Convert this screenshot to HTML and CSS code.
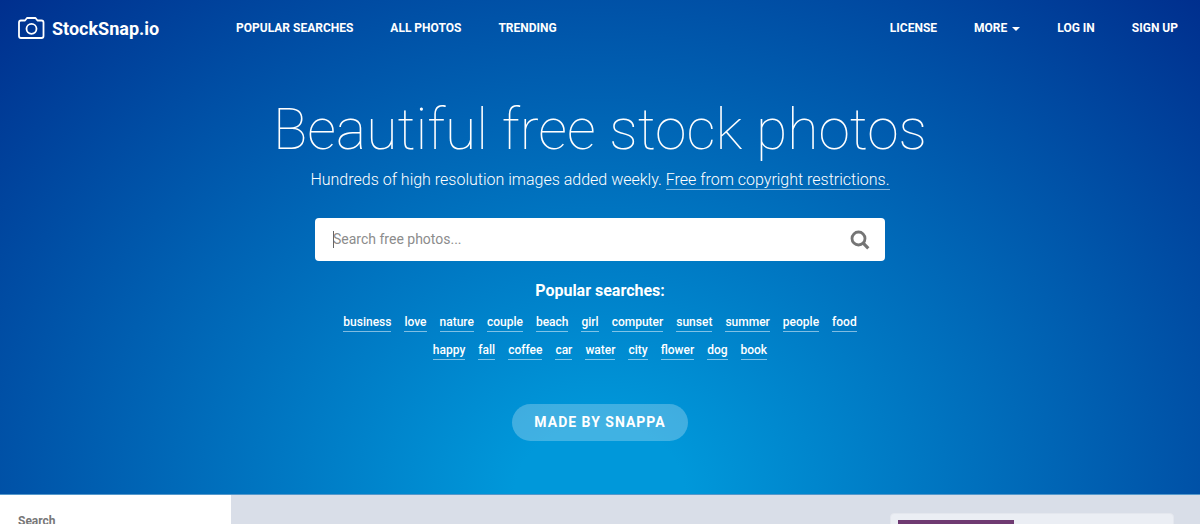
FILE: index.html
```html
<!DOCTYPE html>
<html lang="en">
<head>
<meta charset="utf-8">
<meta name="viewport" content="width=device-width, initial-scale=1">
<title>StockSnap.io</title>
<link rel="stylesheet" href="styles.css">
</head>
<body>
<header class="hero">
  <nav class="navbar">
    <a class="brand" href="#">
      <svg class="brand-icon" width="27" height="22" viewBox="0 0 27 22" fill="none" stroke="currentColor" stroke-width="1.800" stroke-linejoin="round" aria-hidden="true">
        <path d="M3 3.500H7L9 1H17.500L19.500 3.500H23.500Q25.500 3.500 25.500 5.500V19Q25.500 21 23.500 21H3Q1 21 1 19V5.500Q1 3.500 3 3.500Z"/>
        <circle cx="13.500" cy="11.800" r="5"/>
      </svg>
      <span>StockSnap.io</span>
    </a>
    <div class="nav-links">
      <a href="#">Popular Searches</a>
      <a href="#">All Photos</a>
      <a href="#">Trending</a>
    </div>
    <div class="nav-links nav-right">
      <a href="#">License</a>
      <a class="more" href="#">More <span class="caret"></span></a>
      <a href="#">Log In</a>
      <a href="#">Sign Up</a>
    </div>
  </nav>
  <div class="intro">
    <h1>Beautiful free stock photos</h1>
    <p class="tagline">Hundreds of high resolution images added weekly. <a href="#">Free from copyright restrictions.</a></p>
    <form class="search">
      <input type="text" aria-label="Search free photos" placeholder="Search free photos...">
      <span class="cursor"></span>
      <button type="button" aria-label="Search">
        <svg width="20" height="20" viewBox="0 0 20 20" fill="none" stroke="currentColor" aria-hidden="true">
          <circle cx="8.500" cy="8.500" r="6.500" stroke-width="2.800"/>
          <path d="M13.200 13.200L18.300 18.300" stroke-width="3.200"/>
        </svg>
      </button>
    </form>
    <h2>Popular searches:</h2>
    <div class="tags">
      <a href="#">business</a><a href="#">love</a><a href="#">nature</a><a href="#">couple</a><a href="#">beach</a><a href="#">girl</a><a href="#">computer</a><a href="#">sunset</a><a href="#">summer</a><a href="#">people</a><a href="#">food</a><a href="#">happy</a><a href="#">fall</a><a href="#">coffee</a><a href="#">car</a><a href="#">water</a><a href="#">city</a><a href="#">flower</a><a href="#">dog</a><a href="#">book</a>
    </div>
    <a class="pill" href="#">Made by Snappa</a>
  </div>
</header>
<main class="content">
  <aside class="sidebar">
    <h3>Search</h3>
  </aside>
  <section class="gallery">
    <div class="card"><div class="thumb"></div></div>
  </section>
</main>
</body>
</html>
```
FILE: styles.css
```css
* {
  box-sizing: border-box;
}

html,
body {
  height: 100%;
}

body {
  margin: 0;
  display: flex;
  flex-direction: column;
  overflow: hidden;
  font-family: Roboto, "Liberation Sans", sans-serif;
  color: #fff;
}

a {
  color: inherit;
  text-decoration: none;
}

.hero {
  flex: none;
  padding-bottom: 53px;
  border-bottom: 1px solid #5598cb;
  background: radial-gradient(ellipse at 50% 100%, #0098da 0%, #0098da 10%, #002f8e 100%);
}

.navbar {
  display: flex;
  align-items: center;
  height: 56px;
  padding: 0 22px 0 18px;
}

.brand {
  display: flex;
  align-items: center;
  gap: 7px;
  width: 218px;
  font-size: 18px;
  font-weight: 700;
}

.nav-links {
  display: flex;
  gap: 37px;
  font-size: 12px;
  font-weight: 700;
  text-transform: uppercase;
  white-space: nowrap;
}

.nav-right {
  margin-left: auto;
}

.more {
  display: flex;
  align-items: center;
  gap: 5px;
}

.caret {
  margin-top: 2px;
  border: 4px solid transparent;
  border-top-color: #fff;
  border-bottom: 0;
}

.intro {
  display: flex;
  flex-direction: column;
  align-items: center;
  padding-top: 40px;
}

h1 {
  margin: 0;
  font-size: 57px;
  font-weight: 100;
  line-height: 68px;
}

.tagline {
  margin: 4px 0 0;
  font-size: 16px;
  font-weight: 300;
  line-height: 24px;
}

.tagline a {
  border-bottom: 1px solid rgba(255, 255, 255, 0.5);
}

.search {
  position: relative;
  display: flex;
  align-items: center;
  width: 570px;
  max-width: 100%;
  height: 43px;
  margin-top: 26px;
  border-radius: 4px;
  background: #fff;
}

.search input {
  flex: 1;
  min-width: 0;
  height: 100%;
  padding: 0 18px 2px;
  border: 0;
  outline: 0;
  background: none;
  font: 14px Roboto, "Liberation Sans", sans-serif;
  color: #555;
}

.search input::placeholder {
  color: #8c8c8c;
  opacity: 1;
}

.cursor {
  position: absolute;
  left: 18px;
  top: 13px;
  width: 1px;
  height: 17px;
  background: #666;
}

.search button {
  display: flex;
  padding: 0 15px;
  border: 0;
  background: none;
  color: #757575;
}

h2 {
  margin: 20px 0 0;
  font-size: 16px;
  font-weight: 700;
  line-height: 20px;
}

.tags {
  display: flex;
  flex-wrap: wrap;
  justify-content: center;
  gap: 10px 13px;
  width: 540px;
  max-width: 100%;
  margin-top: 13px;
  font-size: 12px;
  font-weight: 500;
  line-height: 17px;
}

.tags a {
  border-bottom: 1px solid rgba(255, 255, 255, 0.5);
}

.pill {
  margin-top: 44px;
  padding: 0 22px;
  border-radius: 19px;
  background: rgba(255, 255, 255, 0.25);
  font-size: 14px;
  font-weight: 700;
  line-height: 37px;
  letter-spacing: 1px;
  text-transform: uppercase;
}

.content {
  flex: 1;
  display: flex;
  min-height: 0;
  overflow: hidden;
  background: #d9dee8;
}

.sidebar {
  width: 231px;
  padding: 18px;
  background: #fff;
  color: #777;
}

h3 {
  margin: 0;
  font-size: 12px;
  font-weight: 700;
  line-height: 16px;
}

.gallery {
  flex: 1;
  display: flex;
  justify-content: flex-end;
  padding: 18px 26px 0 0;
}

.card {
  width: 284px;
  height: 200px;
  padding: 6px 7px;
  border: 1px solid #e4e7ee;
  border-radius: 4px;
  background: #ebeef4;
}

.thumb {
  width: 116px;
  height: 160px;
  background: #6f3a72;
}
```
